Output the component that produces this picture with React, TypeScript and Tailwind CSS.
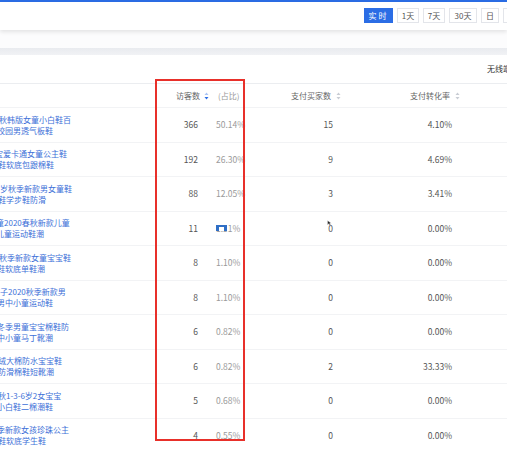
import React from 'react';

const rows = [
    { l1: '秋韩版女童小白鞋百', m1: '-ml-[1px]', l2: '校园男透气板鞋', m2: '-ml-[3px]', uv: '366', pct: '50.14%', buyers: '15', rate: '4.10%' },
    { l1: '宝爱卡通女童公主鞋', m1: '-ml-[5px]', l2: '鞋软底包跟棉鞋', m2: '-ml-[2px]', uv: '192', pct: '26.30%', buyers: '9', rate: '4.69%' },
    { l1: '岁秋季新款男女童鞋', m1: 'ml-0', l2: '鞋学步鞋防滑', m2: '-ml-[2px]', uv: '88', pct: '12.05%', buyers: '3', rate: '3.41%' },
    { l1: '童2020春秋新款儿童', m1: '-ml-[4px]', l2: '儿童运动鞋潮', m2: '-ml-[4px]', uv: '11', pct: '1.51%', buyers: '0', rate: '0.00%' },
    { l1: '秋季新款女童宝宝鞋', m1: '-ml-[1px]', l2: '鞋软底单鞋潮', m2: '-ml-[3px]', uv: '8', pct: '1.10%', buyers: '0', rate: '0.00%' },
    { l1: '子2020秋季新款男', m1: 'ml-0', l2: '男中小童运动鞋', m2: '-ml-[3px]', uv: '8', pct: '1.10%', buyers: '0', rate: '0.00%' },
    { l1: '冬季男童宝宝棉鞋防', m1: '-ml-[3px]', l2: '中小童马丁靴潮', m2: '-ml-[3px]', uv: '6', pct: '0.82%', buyers: '0', rate: '0.00%' },
    { l1: '绒大棉防水宝宝鞋', m1: '-ml-[2px]', l2: '防滑棉鞋短靴潮', m2: '-ml-[2px]', uv: '6', pct: '0.82%', buyers: '2', rate: '33.33%' },
    { l1: '秋1-3-6岁2女宝宝', m1: '-ml-[2px]', l2: '小白鞋二棉潮鞋', m2: '-ml-[3px]', uv: '5', pct: '0.68%', buyers: '0', rate: '0.00%' },
    { l1: '季新款女孩珍珠公主', m1: '-ml-[3px]', l2: '鞋软底学生鞋', m2: '-ml-[2px]', uv: '4', pct: '0.55%', buyers: '0', rate: '0.00%' },
];

const cols = 'grid grid-cols-[160px_40px_45px_98px_119px_1fr]';

const SortIcon = ({ active }: { active?: boolean }) => (
    <svg width="5" height="8" viewBox="0 0 5 8" className="shrink-0">
        <path d="M2.5 0.5 L4.5 3 L0.5 3 Z" fill={active ? '#a9c4f5' : '#c8ccd4'} />
        <path d="M2.5 7.5 L4.5 5 L0.5 5 Z" fill={active ? '#2b6de5' : '#c8ccd4'} />
    </svg>
);

const App: React.FC = () => {
    return (
        <div className="relative w-[507px] h-[457px] overflow-hidden bg-white font-['Noto_Sans_CJK_SC','Noto_Sans',sans-serif]">
            <div className="h-[2px] bg-[#2b6de5]" />

            {/* top toolbar */}
            <div className="relative z-10 h-[28px] bg-white shadow-[0_2px_4px_rgba(0,0,0,0.10)] flex items-start pt-[6px] pl-[364px] gap-[4px] overflow-hidden text-[8px] leading-none">
                <button className="w-[29px] h-[15px] shrink-0 bg-[#2b6de5] text-white flex items-center justify-center tracking-[2px]">实时</button>
                <button className="w-[22px] h-[15px] shrink-0 border border-[#e3e5ea] text-[#555] flex items-center justify-center">1天</button>
                <button className="w-[22px] h-[15px] shrink-0 border border-[#e3e5ea] text-[#555] flex items-center justify-center">7天</button>
                <button className="w-[28px] h-[15px] shrink-0 border border-[#e3e5ea] text-[#555] flex items-center justify-center">30天</button>
                <button className="w-[18px] h-[15px] shrink-0 border border-[#e3e5ea] text-[#555] flex items-center justify-center">日</button>
                <button className="w-[18px] h-[15px] shrink-0 border border-[#e3e5ea] text-[#555] flex items-center justify-center">周</button>
            </div>

            <div className="h-[18px] bg-[#fcfcfd]" />
            <div className="h-[7px] bg-gradient-to-b from-[#e9ebef] to-[#f1f2f5]" />

            {/* panel */}
            <div className="h-[28px] flex items-center pl-[487px] overflow-hidden">
                <span className="text-[8px] text-[#333] whitespace-nowrap">无线端</span>
            </div>

            <div className={`${cols} h-[24px] border-t border-[#ebedf0] items-center text-[8px] text-[#666]`}>
                <div />
                <div className="text-right whitespace-nowrap -ml-[10px]">访客数</div>
                <div className="flex items-center pl-[4px]">
                    <SortIcon active />
                    <span className="ml-[9px] text-[#999] whitespace-nowrap">(占比)</span>
                </div>
                <div className="flex items-center justify-end gap-[5px] pr-[2px] whitespace-nowrap">
                    支付买家数 <SortIcon />
                </div>
                <div className="flex items-center justify-end gap-[5px] pr-[2px] whitespace-nowrap">
                    支付转化率 <SortIcon />
                </div>
                <div />
            </div>

            {rows.map((r, i) => (
                <div key={i} className={`${cols} h-[34.5px] border-t border-[#f2f3f5] items-center text-[8.5px]`}>
                    <div className="overflow-hidden text-[#3d70d8] text-[8px] leading-[11px] whitespace-nowrap">
                        <div className={r.m1}>{r.l1}</div>
                        <div className={r.m2}>{r.l2}</div>
                    </div>
                    <div className="text-right pr-[2px] text-[#555]">{r.uv}</div>
                    <div className="relative pl-[16px] text-[#9a9a9a] whitespace-nowrap">
                        {r.pct}
                        {i === 3 && (
                            <svg width="12" height="7" viewBox="0 0 12 7" className="absolute left-[16px] top-[2px]">
                                <rect x="0" y="0" width="12" height="7" fill="#ffffff" />
                                <path d="M0 1 H11 V7 H8 V3 H3 V7 H0 Z" fill="#2f6fc6" />
                            </svg>
                        )}
                    </div>
                    <div className="relative text-right pr-[10px] text-[#555]">
                        {r.buyers}
                        {i === 3 && (
                            <svg width="5" height="6" viewBox="0 0 5 6" className="absolute right-[11px] -top-[2px]">
                                <path d="M0.5 0.5 L0.5 5 L1.8 3.8 L3 5.5 L3.8 5 L2.7 3.3 L4.3 3.3 Z" fill="#222" stroke="#fff" strokeWidth="0.4" />
                            </svg>
                        )}
                    </div>
                    <div className="text-right pr-[10px] text-[#555]">{r.rate}</div>
                    <div />
                </div>
            ))}

            {/* highlight box */}
            <div className="absolute left-[155px] top-[79px] w-[90px] h-[362px] border-2 border-[#e8302a] pointer-events-none" />
        </div>
    );
};

export default App;
